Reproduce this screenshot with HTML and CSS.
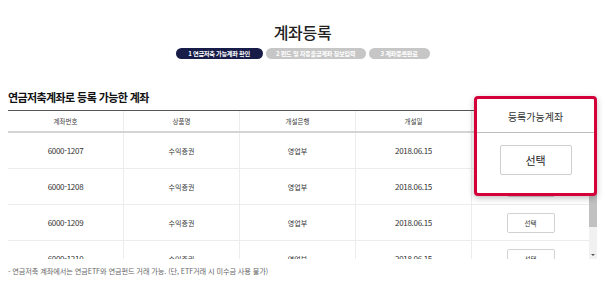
FILE: index.html
```html
<!DOCTYPE html>
<html lang="ko">
<head>
<meta charset="utf-8">
<title>계좌등록</title>
<link rel="stylesheet" href="styles.css">
</head>
<body>
<div class="page">
  <h1 class="title">계좌등록</h1>
  <div class="steps">
    <span class="step step-1 active">1 연금저축 가능계좌 확인</span>
    <span class="step step-2">2 펀드 및 자동출금계좌 정보입력</span>
    <span class="step step-3">3 계좌등록완료</span>
  </div>

  <h2 class="section-title">연금저축계좌로 등록 가능한 계좌</h2>

  <div class="grid">
    <div class="grid-head">
      <div class="cell">계좌번호</div>
      <div class="cell">상품명</div>
      <div class="cell">개설은행</div>
      <div class="cell">개설일</div>
      <div class="cell last"></div>
    </div>
    <div class="grid-body">
      <div class="rows">
        <div class="row">
          <div class="cell num">6000-1207</div>
          <div class="cell">수익증권</div>
          <div class="cell">영업부</div>
          <div class="cell num">2018.06.15</div>
          <div class="cell last"><button class="btn-sm">선택</button></div>
        </div>
        <div class="row">
          <div class="cell num">6000-1208</div>
          <div class="cell">수익증권</div>
          <div class="cell">영업부</div>
          <div class="cell num">2018.06.15</div>
          <div class="cell last"><button class="btn-sm">선택</button></div>
        </div>
        <div class="row">
          <div class="cell num">6000-1209</div>
          <div class="cell">수익증권</div>
          <div class="cell">영업부</div>
          <div class="cell num">2018.06.15</div>
          <div class="cell last"><button class="btn-sm">선택</button></div>
        </div>
        <div class="row">
          <div class="cell num">6000-1210</div>
          <div class="cell">수익증권</div>
          <div class="cell">영업부</div>
          <div class="cell num">2018.06.15</div>
          <div class="cell last"><button class="btn-sm">선택</button></div>
        </div>
      </div>
      <div class="scrollbar">
        <div class="thumb"></div>
        <div class="track"></div>
        <div class="arrow"></div>
      </div>
    </div>
  </div>

  <p class="note">- 연금저축 계좌에서는 연금ETF와 연금펀드 거래 가능. (단, ETF거래 시 미수금 사용 불가)</p>

  <div class="popup">
    <div class="popup-head">등록가능계좌</div>
    <div class="popup-body"><button class="btn-lg">선택</button></div>
  </div>
</div>
</body>
</html>
```

FILE: styles.css
```css
* { box-sizing: border-box; }
html, body { margin: 0; padding: 0; background: #fff; }
body {
  font-family: "Noto Sans CJK KR", "Noto Sans", sans-serif;
  color: #222;
}
.page {
  position: relative;
  width: 605px;
  height: 297px;
  padding: 22px 8px 0 8px;
}
.title {
  margin: 0;
  text-align: center;
  font-size: 16px;
  line-height: 20px;
  font-weight: 500;
  color: #222;
  letter-spacing: -0.3px;
}
.steps {
  display: flex;
  justify-content: center;
  gap: 3px;
  margin-top: 6px;
}
.step {
  display: inline-flex;
  align-items: center;
  justify-content: center;
  height: 11px;
  border-radius: 6px;
  background: #c6c6c6;
  color: #fff;
  font-size: 6.2px;
  font-weight: 700;
  letter-spacing: -0.3px;
  white-space: nowrap;
}
.step.active { background: #181c48; }
.step-1 { width: 87px; }
.step-2 { width: 100px; }
.step-3 { width: 61px; }

.section-title {
  margin: 31px 0 0 0;
  font-size: 11px;
  line-height: 14px;
  font-weight: 700;
  letter-spacing: -0.6px;
  color: #111;
}
.grid {
  margin-top: 6px;
  width: 589px;
  border-top: 1px solid #555;
}
.grid-head {
  display: grid;
  grid-template-columns: 116px 116px 116px 116px 125px;
  height: 22px;
  border-bottom: 2px solid #d4d4d4;
}
.grid-head .cell {
  display: flex;
  align-items: center;
  justify-content: center;
  font-size: 6.5px;
  color: #444;
  border-right: 1px solid #ececec;
}
.grid-head .cell.last { border-right: 0; }

.grid-body {
  display: flex;
  height: 126px;
  overflow: hidden;
}
.rows { width: 581px; }
.row {
  display: grid;
  grid-template-columns: 116px 116px 116px 116px 117px;
  height: 36px;
  border-bottom: 1px solid #ececec;
}
.row .cell {
  display: flex;
  align-items: center;
  justify-content: center;
  font-size: 7px;
  color: #333;
  border-right: 1px solid #ececec;
}
.row .cell.num { font-size: 8px; letter-spacing: -0.3px; }
.row .cell.last { border-right: 0; }
.btn-sm {
  width: 48px;
  height: 20px;
  border: 1px solid #d2d2d2;
  border-radius: 2px;
  background: #fff;
  font-family: inherit;
  font-size: 6.5px;
  color: #333;
  padding: 0;
}
.scrollbar {
  width: 8px;
  display: flex;
  flex-direction: column;
  background: #f1f1f1;
}
.thumb { height: 94px; background: #c1c1c1; }
.track { flex: 1; }
.arrow {
  height: 8px;
  display: flex;
  align-items: center;
  justify-content: center;
}
.arrow::before {
  content: "";
  border-left: 2px solid transparent;
  border-right: 2px solid transparent;
  border-top: 2px solid #555;
}
.note {
  margin: 7px 0 0 0;
  font-size: 7.2px;
  line-height: 10px;
  color: #666;
  letter-spacing: -0.1px;
}
.popup {
  position: absolute;
  left: 474px;
  top: 96px;
  width: 123px;
  height: 100px;
  border: 3px solid #d4003a;
  border-radius: 4px;
  background: #fff;
  box-shadow: 0 2px 6px rgba(0,0,0,0.25);
  display: flex;
  flex-direction: column;
}
.popup-head {
  height: 34px;
  border-bottom: 1px solid #bdbdbd;
  display: flex;
  align-items: center;
  justify-content: center;
  font-size: 10px;
  color: #333;
  padding-top: 2px;
}
.popup-body {
  display: flex;
  justify-content: center;
  padding-top: 12px;
}
.btn-lg {
  width: 72px;
  height: 30px;
  border: 1px solid #cfcfcf;
  border-radius: 2px;
  background: #fff;
  font-family: inherit;
  font-size: 11px;
  color: #222;
  padding: 0;
}
```
